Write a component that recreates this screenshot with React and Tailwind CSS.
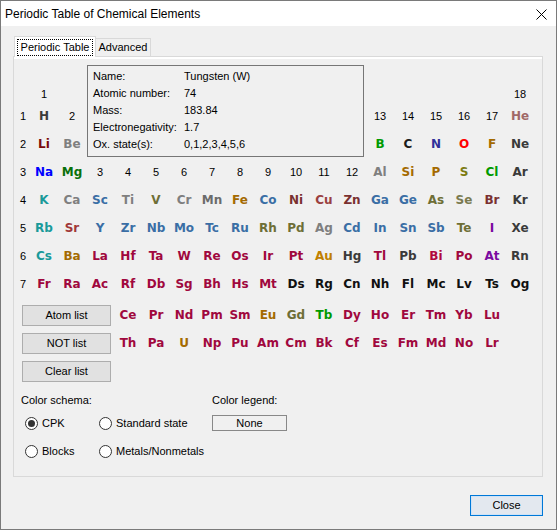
const DARK = "#3a3a3a";
const GRAY = "#7f7f7f";
const STEEL = "#3a6ea5";
const OLIVE = "#6e6e36";
const OCHRE = "#a46a00";
const CRIMSON = "#a0083e";
const TEAL = "#1a9a9a";
const BROWN = "#7a3030";
const PURPLE = "#7a0aa0";
const BLACK = "#111111";

// Each cell: null (empty), a string (group number) or [symbol, colour]
const TABLE = [
  ["1", null, null, null, null, null, null, null, null, null, null, null, null, null, null, null, null, "18"],
  [["H", DARK], "2", null, null, null, null, null, null, null, null, null, null, "13", "14", "15", "16", "17", ["He", "#a06868"]],
  [["Li", "#7a0a0a"], ["Be", GRAY], null, null, null, null, null, null, null, null, null, null, ["B", "#009a00"], ["C", "#1c1c1c"], ["N", "#30309a"], ["O", "#ff0000"], ["F", OCHRE], ["Ne", DARK]],
  [["Na", "#0000ff"], ["Mg", "#0a700a"], "3", "4", "5", "6", "7", "8", "9", "10", "11", "12", ["Al", GRAY], ["Si", OCHRE], ["P", OCHRE], ["S", "#7b7b10"], ["Cl", "#009a00"], ["Ar", DARK]],
  [["K", TEAL], ["Ca", GRAY], ["Sc", STEEL], ["Ti", GRAY], ["V", OLIVE], ["Cr", GRAY], ["Mn", "#6b6b6b"], ["Fe", OCHRE], ["Co", STEEL], ["Ni", BROWN], ["Cu", "#9a4040"], ["Zn", BROWN], ["Ga", STEEL], ["Ge", STEEL], ["As", OLIVE], ["Se", "#7a7a50"], ["Br", BROWN], ["Kr", DARK]],
  [["Rb", TEAL], ["Sr", "#a03838"], ["Y", STEEL], ["Zr", STEEL], ["Nb", STEEL], ["Mo", STEEL], ["Tc", STEEL], ["Ru", STEEL], ["Rh", OLIVE], ["Pd", OLIVE], ["Ag", GRAY], ["Cd", STEEL], ["In", STEEL], ["Sn", STEEL], ["Sb", STEEL], ["Te", OLIVE], ["I", PURPLE], ["Xe", DARK]],
  [["Cs", TEAL], ["Ba", OCHRE], ["La", CRIMSON], ["Hf", CRIMSON], ["Ta", CRIMSON], ["W", CRIMSON], ["Re", CRIMSON], ["Os", CRIMSON], ["Ir", CRIMSON], ["Pt", CRIMSON], ["Au", "#c08000"], ["Hg", DARK], ["Tl", CRIMSON], ["Pb", DARK], ["Bi", "#b0083e"], ["Po", CRIMSON], ["At", PURPLE], ["Rn", DARK]],
  [["Fr", CRIMSON], ["Ra", CRIMSON], ["Ac", CRIMSON], ["Rf", CRIMSON], ["Db", CRIMSON], ["Sg", CRIMSON], ["Bh", CRIMSON], ["Hs", CRIMSON], ["Mt", CRIMSON], ["Ds", BLACK], ["Rg", BLACK], ["Cn", BLACK], ["Nh", BLACK], ["Fl", BLACK], ["Mc", BLACK], ["Lv", BLACK], ["Ts", BLACK], ["Og", BLACK]],
];

const LANTHANIDES = [
  ["Ce", CRIMSON], ["Pr", CRIMSON], ["Nd", CRIMSON], ["Pm", CRIMSON], ["Sm", CRIMSON], ["Eu", OCHRE], ["Gd", OLIVE],
  ["Tb", "#009a00"], ["Dy", CRIMSON], ["Ho", CRIMSON], ["Er", CRIMSON], ["Tm", CRIMSON], ["Yb", CRIMSON], ["Lu", CRIMSON],
];

const ACTINIDES = [
  ["Th", CRIMSON], ["Pa", CRIMSON], ["U", OCHRE], ["Np", CRIMSON], ["Pu", CRIMSON], ["Am", CRIMSON], ["Cm", CRIMSON],
  ["Bk", CRIMSON], ["Cf", CRIMSON], ["Es", CRIMSON], ["Fm", CRIMSON], ["Md", CRIMSON], ["No", CRIMSON], ["Lr", CRIMSON],
];

const INFO = [
  ["Name:", "Tungsten (W)"],
  ["Atomic number:", "74"],
  ["Mass:", "183.84"],
  ["Electronegativity:", "1.7"],
  ["Ox. state(s):", "0,1,2,3,4,5,6"],
];

function Cell({ value }) {
  if (!value) return <div className="w-[28px] h-full" />;
  if (typeof value === "string") {
    return (
      <div className="w-[28px] h-full flex items-center justify-center text-[11px] text-black">
        {value}
      </div>
    );
  }
  const [sym, color] = value;
  return (
    <div
      className="w-[28px] h-full flex items-center justify-center text-[12px] font-bold font-['DejaVu_Sans',sans-serif] cursor-default"
      style={{ color }}
    >
      {sym}
    </div>
  );
}

function Radio({ label, checked }) {
  return (
    <label className="flex items-center gap-[4px] h-[16px]">
      <span className="w-[13px] h-[13px] rounded-full border border-[#333] bg-white flex items-center justify-center">
        {checked && <span className="w-[7px] h-[7px] rounded-full bg-[#333]" />}
      </span>
      <span>{label}</span>
    </label>
  );
}

function ListButton({ children }) {
  return (
    <button className="w-[89px] h-[21px] border border-[#adadad] bg-[#e1e1e1] text-[11px] text-black">
      {children}
    </button>
  );
}

export default function App() {
  return (
    <div className="w-[557px] h-[530px] border border-[#7a7a7a] bg-[#f0f0f0] flex flex-col font-['Liberation_Sans',Arial,sans-serif] text-[11px] text-black overflow-hidden">
      {/* Title bar */}
      <div className="h-[25px] bg-white flex items-center justify-between pl-[4px] pr-[9px] shrink-0">
        <span className="text-[12px]">Periodic Table of Chemical Elements</span>
        <svg width="11" height="11" viewBox="0 0 11 11" className="mt-[1px]">
          <path d="M0.5 0.5 L10.5 10.5 M10.5 0.5 L0.5 10.5" stroke="#000" strokeWidth="1" />
        </svg>
      </div>

      <div className="flex-1 pl-[12px] pt-[10px]">
        {/* Tabs */}
        <div className="flex items-start h-[20px] pl-[1px] relative z-10">
          <div className="w-[82px] h-[21px] border border-b-0 border-[#d9d9d9] bg-white flex items-center justify-center">
            <span className="outline outline-1 outline-dotted outline-black px-[3px] leading-[15px]">Periodic Table</span>
          </div>
          <div className="w-[55px] h-[18px] mt-[2px] border border-l-0 border-b-0 border-[#d9d9d9] bg-[#f0f0f0] flex items-center justify-center">
            Advanced
          </div>
        </div>

        {/* Pane */}
        <div className="w-[530px] h-[421px] border border-[#d9d9d9] shadow-[inset_0_2px_0_#ffffff]">
          <div className="relative h-full">
            {/* Element info */}
            <div className="absolute left-[73px] top-[8px] w-[277px] h-[92px] border border-[#767676] bg-[#f0f0f0] pl-[5px] pt-[2px] z-10">
              {INFO.map(([k, v]) => (
                <div key={k} className="flex h-[17px] items-center">
                  <span className="w-[91px]">{k}</span>
                  <span>{v}</span>
                </div>
              ))}
            </div>

            {/* Main table */}
            <div className="pl-[2px] pt-[29px]">
              {TABLE.map((row, i) => (
                <div key={i} className={`flex ${i === 0 ? "h-[16px]" : "h-[28px]"}`}>
                  <div className="w-[14px] h-full flex items-center justify-center">{i === 0 ? "" : i}</div>
                  {row.map((c, j) => (
                    <Cell key={j} value={c} />
                  ))}
                </div>
              ))}

              {/* f-block and list buttons */}
              <div className="flex mt-[3px]">
                <div className="w-[98px] pl-[6px] pt-[4px] flex flex-col gap-[7px]">
                  <ListButton>Atom list</ListButton>
                  <ListButton>NOT list</ListButton>
                  <ListButton>Clear list</ListButton>
                </div>
                <div className="flex flex-col">
                  {[LANTHANIDES, ACTINIDES].map((series, i) => (
                    <div key={i} className="flex h-[28px]">
                      {series.map((c) => (
                        <Cell key={c[0]} value={c} />
                      ))}
                    </div>
                  ))}
                </div>
              </div>
            </div>

            {/* Colour options */}
            <div className="flex ml-[7px] mt-[11px]">
              <div className="w-[191px]">
                <div className="h-[14px] leading-[14px]">Color schema:</div>
                <div className="grid grid-cols-[74px_auto] gap-y-[12px] mt-[8px] pl-[4px]">
                  <Radio label="CPK" checked />
                  <Radio label="Standard state" />
                  <Radio label="Blocks" />
                  <Radio label="Metals/Nonmetals" />
                </div>
              </div>
              <div>
                <div className="h-[14px] leading-[14px]">Color legend:</div>
                <div className="mt-[8px] w-[75px] h-[16px] border border-[#888] flex items-center justify-center">
                  None
                </div>
              </div>
            </div>
          </div>
        </div>

        {/* Footer */}
        <div className="w-[530px] flex justify-end mt-[18px]">
          <button className="w-[73px] h-[21px] border border-[#0078d7] shadow-[inset_0_0_0_1px_#cfe3f7] bg-[#e3e8ef] text-[11px]">
            Close
          </button>
        </div>
      </div>
    </div>
  );
}
